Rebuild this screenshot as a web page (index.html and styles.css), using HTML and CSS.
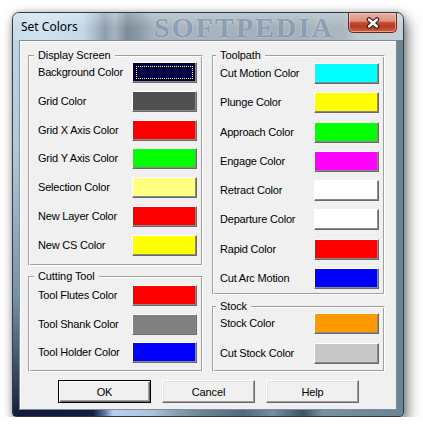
FILE: index.html
```html
<!DOCTYPE html>
<html>
<head>
<meta charset="utf-8">
<title>Set Colors</title>
<link rel="stylesheet" href="styles.css">
</head>
<body>
<div class="window">
  <div class="titlebar">
    <span class="title">Set Colors</span>
    <span class="watermark">SOFTPEDIA</span>
    <button class="close" type="button" aria-label="Close">
      <svg width="14" height="12" viewBox="0 0 14 12">
        <path d="M3 2.5 L11 9.5 M11 2.5 L3 9.5" stroke="#3a1810" stroke-width="4.6" stroke-linecap="round" fill="none"/>
        <path d="M3 2.5 L11 9.5 M11 2.5 L3 9.5" stroke="#ffffff" stroke-width="2.4" stroke-linecap="round" fill="none"/>
      </svg>
    </button>
  </div>
  <div class="client">
    <div class="columns">
      <div class="col col-left">
        <fieldset class="group g-display">
          <legend>Display Screen</legend>
          <div class="rows">
            <span class="label">Background Color</span><span class="swatch focus" style="--c:#000040"></span>
            <span class="label">Grid Color</span><span class="swatch" style="--c:#505050"></span>
            <span class="label">Grid X Axis Color</span><span class="swatch" style="--c:#ff0000"></span>
            <span class="label">Grid Y Axis Color</span><span class="swatch" style="--c:#00ff00"></span>
            <span class="label">Selection Color</span><span class="swatch" style="--c:#ffff80"></span>
            <span class="label">New Layer Color</span><span class="swatch" style="--c:#ff0000"></span>
            <span class="label">New CS Color</span><span class="swatch" style="--c:#ffff00"></span>
          </div>
        </fieldset>
        <fieldset class="group g-cutting">
          <legend>Cutting Tool</legend>
          <div class="rows">
            <span class="label">Tool Flutes Color</span><span class="swatch" style="--c:#ff0000"></span>
            <span class="label">Tool Shank Color</span><span class="swatch" style="--c:#808080"></span>
            <span class="label">Tool Holder Color</span><span class="swatch" style="--c:#0000ff"></span>
          </div>
        </fieldset>
      </div>
      <div class="col col-right">
        <fieldset class="group g-toolpath">
          <legend>Toolpath</legend>
          <div class="rows">
            <span class="label">Cut Motion Color</span><span class="swatch" style="--c:#00ffff"></span>
            <span class="label">Plunge Color</span><span class="swatch" style="--c:#ffff00"></span>
            <span class="label">Approach Color</span><span class="swatch" style="--c:#00ff00"></span>
            <span class="label">Engage Color</span><span class="swatch" style="--c:#ff00ff"></span>
            <span class="label">Retract Color</span><span class="swatch" style="--c:#ffffff"></span>
            <span class="label">Departure Color</span><span class="swatch" style="--c:#ffffff"></span>
            <span class="label">Rapid Color</span><span class="swatch" style="--c:#ff0000"></span>
            <span class="label">Cut Arc Motion</span><span class="swatch" style="--c:#0000ff"></span>
          </div>
        </fieldset>
        <fieldset class="group g-stock">
          <legend>Stock</legend>
          <div class="rows">
            <span class="label">Stock Color</span><span class="swatch" style="--c:#ff9900"></span>
            <span class="label">Cut Stock Color</span><span class="swatch" style="--c:#c8c8c8"></span>
          </div>
        </fieldset>
      </div>
    </div>
    <div class="actions">
      <button class="btn default" type="button">OK</button>
      <button class="btn" type="button">Cancel</button>
      <button class="btn" type="button">Help</button>
    </div>
  </div>
</div>
</body>
</html>
```

FILE: styles.css
```css
html, body {
  margin: 0;
  padding: 0;
  background: #ffffff;
}

body {
  padding: 12px 0 0 12px;
  font-family: "Liberation Sans", Arial, sans-serif;
  font-size: 11px;
  color: #000;
}

.window {
  box-sizing: border-box;
  width: 392px;
  height: 405px;
  border: 1px solid #2e3c4c;
  border-radius: 7px 7px 4px 4px;
  padding: 0 6px 6px 6px;
  display: flex;
  flex-direction: column;
  background:
    linear-gradient(180deg, #c6d8e8 0%, #b2c6d6 35%, #7a90a8 70%, #22304e 96%, #111a3a 100%) left top / 7px 100% no-repeat,
    linear-gradient(90deg, #111a3a 0px, #131d42 80px, #5a7aa0 92px, #b4d2ee 100px, #a8c4dc 140px, #8ea4b4 160px, #6a8494 190px, #4f6a7a 230px, #7290a0 260px, #3c5464 290px, #7890a0 310px, #6a8494 392px);
  box-shadow: 4px 7px 14px rgba(0, 0, 0, 0.5), 0 0 6px rgba(0, 0, 0, 0.25);
}

.titlebar {
  height: 27px;
  flex: none;
  display: flex;
  align-items: flex-start;
  margin: 0 -6px;
  padding: 0 6px;
  border-radius: 6px 6px 0 0;
  background:
    linear-gradient(180deg, rgba(255, 255, 255, 0.28) 0%, rgba(255, 255, 255, 0) 55%),
    linear-gradient(90deg, #c8dcea 0px, #d0e2f0 30px, #c4d8e8 70px, #aabccc 82px, #8e9eac 92px, #a6b4c0 102px, #7b8c9a 114px, #8a9aa8 126px, #a4b2be 140px, #a8b4c0 170px, #a2b0bc 260px, #aab6c0 330px, #c0cad2 345px, #c6ced6 392px);
}

.title {
  box-sizing: border-box;
  width: 135px;
  padding: 6px 0 0 2px;
  font-family: "Noto Sans", "Open Sans", sans-serif;
  font-size: 12px;
  line-height: 15px;
  color: #000;
  white-space: nowrap;
}

.watermark {
  font-family: "Liberation Serif", "Times New Roman", serif;
  font-weight: bold;
  font-size: 28px;
  line-height: 30px;
  letter-spacing: 2.2px;
  color: rgba(70, 100, 135, 0.5);
  text-shadow: 0 0 2px rgba(255, 255, 255, 0.55);
  white-space: nowrap;
}

.close {
  margin-left: auto;
  width: 49px;
  height: 20px;
  padding: 0;
  border: 1px solid #5e2a22;
  border-top: none;
  border-radius: 0 0 5px 5px;
  display: flex;
  align-items: center;
  justify-content: center;
  background: linear-gradient(180deg, #eab0a2 0%, #de9280 42%, #c4482c 52%, #b63c24 72%, #d4603c 100%);
  box-shadow: inset 0 0 0 1px rgba(255, 215, 200, 0.55);
}

.close svg {
  display: block;
}

.client {
  position: relative;
  box-sizing: border-box;
  height: 370px;
  flex: none;
  border: 1px solid #7c8c98;
  background: #f0f0f0;
  box-shadow: inset 1px 1px 0 #ffffff;
  padding: 8px 0 0 8px;
}

.columns {
  display: flex;
  gap: 9px;
  align-items: flex-start;
}

.col {
  display: flex;
  flex-direction: column;
}

.col-left {
  width: 175px;
  gap: 4px;
}

.col-right {
  width: 173px;
  gap: 5px;
}

.group {
  box-sizing: border-box;
  margin: 0;
  min-width: 0;
  border: 1px solid;
  border-color: #a0a0a0 #ffffff #ffffff #a0a0a0;
  box-shadow: inset 1px 1px 0 #ffffff, inset -1px -1px 0 #a0a0a0;
  padding: 0 5px 0 9px;
}

.group legend {
  font-size: 11px;
  line-height: 13px;
  padding: 0 4px;
  margin-left: -4px;
  background: #f0f0f0;
  letter-spacing: -0.1px;
  white-space: nowrap;
}

.g-display { height: 217px; }
.g-cutting { height: 102px; padding-top: 2px; }
.g-toolpath { height: 246px; padding-left: 7px; padding-top: 1px; }
.g-stock { height: 72px; padding-left: 7px; }

.rows {
  display: grid;
  grid-template-columns: 1fr 65px;
  grid-auto-rows: 21px;
  align-items: center;
  row-gap: 7.8px;
}

.g-cutting .rows { row-gap: 7.5px; }
.g-toolpath .rows { row-gap: 8.3px; }
.g-stock .rows { row-gap: 9px; }

.label {
  white-space: nowrap;
  letter-spacing: -0.2px;
  line-height: 13px;
}

.swatch {
  box-sizing: border-box;
  height: 21px;
  border: 1px solid;
  border-color: #ffffff #696969 #696969 #ffffff;
  box-shadow: inset -1px -1px 0 #8a8a8a;
  background: var(--c);
}

.swatch.focus {
  outline: 1px dotted #ffff80;
  outline-offset: -5px;
}

.actions {
  display: flex;
  gap: 11px;
  margin: 8px 0 0 30px;
}

.btn {
  box-sizing: border-box;
  width: 93px;
  height: 23px;
  padding: 0;
  font-family: "Liberation Sans", Arial, sans-serif;
  font-size: 11px;
  letter-spacing: -0.1px;
  color: #000;
  background: #f0f0f0;
  border: 1px solid;
  border-color: #ffffff #696969 #696969 #ffffff;
  box-shadow: inset -1px -1px 0 #a0a0a0, inset 1px 1px 0 #e3e3e3;
}

.btn.default {
  border: 1px solid #000000;
  box-shadow: inset 1px 1px 0 #ffffff, inset -1px -1px 0 #696969, inset -2px -2px 0 #a0a0a0;
}
```
